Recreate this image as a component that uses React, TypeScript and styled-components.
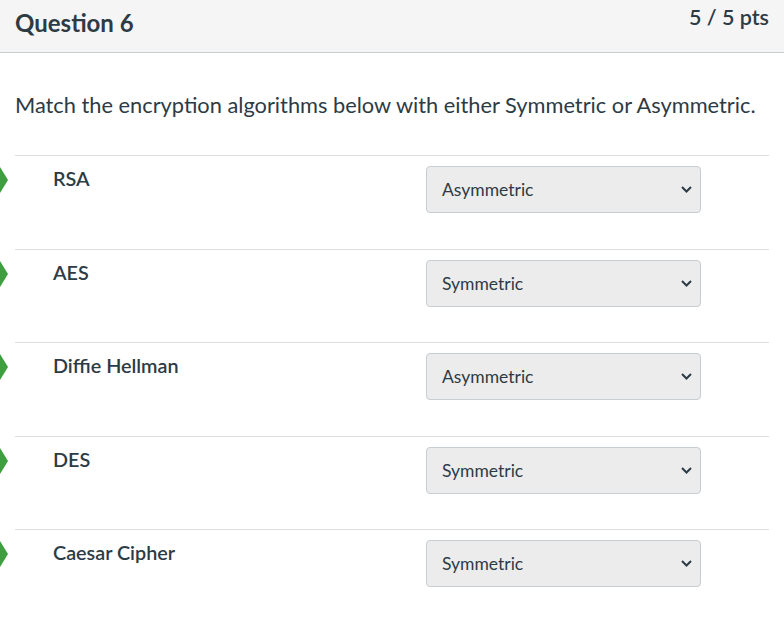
import React from "react";
import styled, { createGlobalStyle } from "styled-components";

const Global = createGlobalStyle`
  html, body { margin: 0; padding: 0; background: #fff; }
  body { font-family: Lato, "Open Sans", sans-serif; color: #2d3b45; }
`;

const Page = styled.div`
  width: 784px;
`;

const Header = styled.div`
  height: 53px;
  box-sizing: border-box;
  background: #f5f5f5;
  border-bottom: 1px solid #c7cdd1;
  display: flex;
  justify-content: space-between;
  align-items: flex-start;
  padding: 0 15px;
`;

const Title = styled.h2`
  margin: 0;
  padding-top: 8px;
  font-size: 24px;
  font-weight: 700;
  line-height: 30px;
  color: #2d3b45;
`;

const Points = styled.div`
  padding-top: 3px;
  font-size: 21.5px;
  font-weight: 600;
  line-height: 28px;
  color: #2d3b45;
`;

const Body = styled.div`
  padding: 38px 15px 0;
`;

const Prompt = styled.p`
  margin: 0 0 36px;
  font-size: 21.8px;
  line-height: 28px;
  color: #2d3b45;
`;

const Row = styled.div`
  position: relative;
  display: grid;
  grid-template-columns: 373px 275px;
  box-sizing: border-box;
  height: 93.5px;
  border-top: 1px solid #dcdfe2;
  padding: 10px 0 0 38px;
`;

const Marker = styled.svg`
  position: absolute;
  left: -15px;
  top: 11px;
`;

const Label = styled.div`
  font-size: 19.8px;
  font-weight: 600;
  line-height: 24px;
  color: #2d3b45;
`;

const SelectWrap = styled.div`
  position: relative;
  width: 275px;
  height: 47px;
`;

const Select = styled.select`
  appearance: none;
  -webkit-appearance: none;
  width: 100%;
  height: 100%;
  box-sizing: border-box;
  background: #ececec;
  border: 1px solid #c7cdd1;
  border-radius: 4px;
  padding: 0 30px 0 15px;
  font-family: Lato, "Open Sans", sans-serif;
  font-size: 17.5px;
  color: #2d3b45;
  outline: none;
`;

const Chevron = styled.svg`
  position: absolute;
  right: 9px;
  top: 20px;
  pointer-events: none;
`;

const items: [string, string][] = [
  ["RSA", "Asymmetric"],
  ["AES", "Symmetric"],
  ["Diffie Hellman", "Asymmetric"],
  ["DES", "Symmetric"],
  ["Caesar Cipher", "Symmetric"],
];

export default function App() {
  return (
    <Page>
      <Global />
      <Header>
        <Title>Question 6</Title>
        <Points>5 / 5 pts</Points>
      </Header>
      <Body>
        <Prompt>Match the encryption algorithms below with either Symmetric or Asymmetric.</Prompt>
        {items.map(([name, val]) => (
          <Row key={name}>
            <Marker width="8" height="26" viewBox="0 0 8 26">
              <polygon points="0,0 8,13 0,26" fill="#3f9e3f" />
            </Marker>
            <Label>{name}</Label>
            <SelectWrap>
              <Select defaultValue={val}>
                <option value="Symmetric">Symmetric</option>
                <option value="Asymmetric">Asymmetric</option>
              </Select>
              <Chevron width="11" height="7" viewBox="0 0 11 7">
                <path d="M1 1 L5.5 5.5 L10 1" fill="none" stroke="#2d3b45" strokeWidth="2" />
              </Chevron>
            </SelectWrap>
          </Row>
        ))}
      </Body>
    </Page>
  );
}
